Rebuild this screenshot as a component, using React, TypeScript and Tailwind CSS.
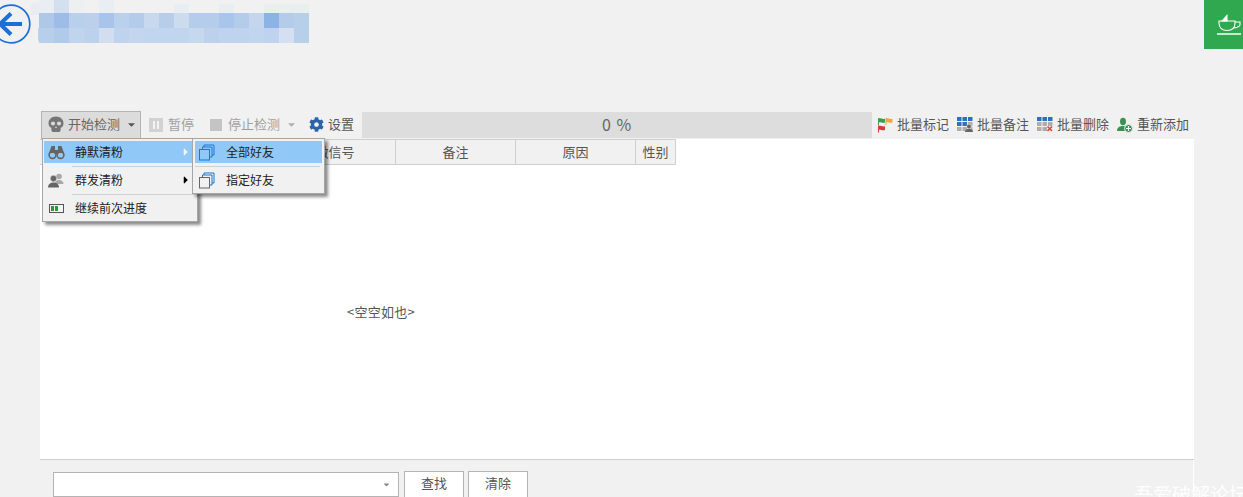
import React from "react";
import { FaCog, FaCaretDown, FaCaretRight } from "react-icons/fa";

const FONT = "font-['Noto_Sans_CJK_SC','Noto_Sans',sans-serif]";

// Mosaic colours of the blurred title, one list per row
const mosaicTop = ["#e9eef3", "#d3e0f0", "#eeeff0", "#f1f1f1", "#e8eef2", "#f1f1f1", "#f1f1f1", "#f1f1f1", "#f1f1f1", "#e8eef2", "#f1f1f1", "#f1f1f1", "#e8eef1", "#f1f1f1", "#f1f1f1", "#e9eeee", "#e9eeee", "#e9eeee"];
const mosaicMid = ["#b0c8e8", "#9dbde6", "#b8d0ec", "#bcd0ec", "#a8c4ea", "#bad0ec", "#b4ccea", "#c8d8ee", "#b8cde9", "#ccdcee", "#b5cdeb", "#b5cdeb", "#a9c6ea", "#b3cce9", "#c4d6ee", "#8cb3e3", "#b4ccea", "#b8cfea"];
const mosaicLow = ["#b8cfec", "#b0caea", "#c0d4ee", "#bcd1ec", "#d2def0", "#bfd3ee", "#c4d6ee", "#c2d5ee", "#c2d5ee", "#c2d5ee", "#c6d8ee", "#bcd1ec", "#bfd3ee", "#bfd3ee", "#c2d5ee", "#bfd3ee", "#d4e0f1", "#b8cfea"];

const BackIcon = () => (
  <svg width="40" height="40" viewBox="0 0 40 40" className="-ml-[9px] mt-[4px] shrink-0">
    <circle cx="20" cy="20" r="18.8" fill="none" stroke="#1c6fd6" strokeWidth="1.7" />
    <path d="M9 20H31M20 9.5L9 20L20 30.5" fill="none" stroke="#1c6fd6" strokeWidth="4" />
  </svg>
);

const Mosaic = () => (
  <svg width="279" height="43" viewBox="0 0 279 43" className="shrink-0">
    <rect x="0" y="2" width="10" height="12" rx="5" fill="#e9edf1" />
    <rect x="0" y="13" width="10" height="2" fill="#e9edf1" />
    <rect x="7" y="28" width="3" height="13" rx="1" fill="#bcd1ec" />
    {mosaicTop.map((c, i) => (
      <rect key={i} x={8 + i * 15} y={i > 8 ? 4 : 0} width="15" height={i > 8 ? 9 : 13} fill={c} />
    ))}
    {mosaicMid.map((c, i) => (
      <rect key={i} x={8 + i * 15} y="13" width="15" height="15" fill={c} />
    ))}
    {mosaicLow.map((c, i) => (
      <rect key={i} x={8 + i * 15} y="28" width="15" height="15" fill={c} />
    ))}
  </svg>
);

const CupIcon = () => (
  <svg width="26" height="22" viewBox="0 0 26 22" fill="none" stroke="#fff" strokeWidth="1.1">
    <path d="M3 7H19V9C19 14 16 16.5 11 16.5C6 16.5 3 14 3 9Z" />
    <path d="M19 8H24V10.5C24 12.5 21.5 13.5 18 14" />
    <path d="M1 20H25" strokeWidth="1.5" />
    <path d="M6 7L11 1.5L11 7Z" fill="#fff" />
  </svg>
);

const SkullIcon = () => (
  <svg width="16" height="17" viewBox="0 0 16 17">
    <path d="M8 0.5C12.3 0.5 15.5 3.4 15.5 7.2C15.5 9.6 14.3 11 12.6 11.8V14.2C12.6 15.4 11.6 16 10.6 16H5.4C4.4 16 3.4 15.4 3.4 14.2V11.8C1.7 11 0.5 9.6 0.5 7.2C0.5 3.4 3.7 0.5 8 0.5Z" fill="#757575" />
    <circle cx="5" cy="7.5" r="2.1" fill="#d8d8d8" />
    <circle cx="11" cy="7.5" r="2.1" fill="#d8d8d8" />
    <path d="M8 10L9 12H7Z" fill="#d8d8d8" />
  </svg>
);

const BinocularsIcon = () => (
  <svg width="17" height="15" viewBox="0 0 17 15">
    <path d="M3.5 1H7V5H10V1H13.5L16 8H10.5V9H6.5V8H1Z" fill="#646464" />
    <circle cx="4.5" cy="10" r="3.4" fill="none" stroke="#646464" strokeWidth="1.6" />
    <circle cx="12.5" cy="10" r="3.4" fill="none" stroke="#646464" strokeWidth="1.6" />
  </svg>
);

const UsersIcon = () => (
  <svg width="16" height="15" viewBox="0 0 16 15">
    <circle cx="11" cy="3.5" r="2.8" fill="#a8a8a8" />
    <path d="M7 11C7 8 9 7 11 7C13 7 15.5 8 15.5 11Z" fill="#a8a8a8" />
    <circle cx="5.5" cy="5.5" r="3.2" fill="#666" stroke="#f1f1f1" strokeWidth="0.5" />
    <path d="M0 14.5C0 11 2.5 9.5 5.5 9.5C8.5 9.5 11 11 11 14.5Z" fill="#666" />
  </svg>
);

const Flag = ({ x, y, color }: { x: number; y: number; color: string }) => (
  <g transform={`translate(${x} ${y})`}>
    <path d="M0.5 0V7" stroke={color} />
    <path d="M0.5 0.5C2.5 -0.3 4 1.6 7 0.8V4.6C4 5.4 2.5 3.6 0.5 4.4Z" fill={color} />
  </g>
);

const FlagsIcon = () => (
  <svg width="15" height="16" viewBox="0 0 15 16">
    <Flag x={0} y={1} color="#3f9a4e" />
    <Flag x={7.5} y={1} color="#f0a83c" />
    <Flag x={0} y={8.5} color="#d93a3a" />
  </svg>
);

const GridCells = ({ colors }: { colors: string[] }) => (
  <>
    {colors.map((c, i) => (
      <rect key={i} x={(i % 3) * 5.5} y={Math.floor(i / 3) * 5} width="4.5" height="4" fill={c} />
    ))}
  </>
);

const BLUE = "#2f6fc0";
const GREY = "#adadad";

const GridNoteIcon = () => (
  <svg width="16" height="15" viewBox="0 0 16 15">
    <GridCells colors={[BLUE, BLUE, BLUE, BLUE, BLUE, GREY, GREY, GREY, GREY]} />
    <circle cx="12" cy="9.5" r="2.4" fill="#666" stroke="#f1f1f1" strokeWidth="0.6" />
    <path d="M8 15C8 12.5 10 12 12 12C14 12 16 12.5 16 15Z" fill="#666" />
  </svg>
);

const GridDeleteIcon = () => (
  <svg width="16" height="15" viewBox="0 0 16 15">
    <GridCells colors={[BLUE, BLUE, BLUE, GREY, GREY, GREY, GREY, GREY, GREY]} />
    <rect x="10" y="9" width="6" height="6" fill="#f1f1f1" />
    <path d="M10.5 9.5L15 14M15 9.5L10.5 14" stroke="#d8453a" strokeWidth="1.6" />
  </svg>
);

const AddUserIcon = () => (
  <svg width="16" height="16" viewBox="0 0 16 16">
    <ellipse cx="6" cy="4.5" rx="3" ry="3.8" fill="#3a9152" />
    <path d="M0 14C0 10 3 9 6 9C8 9 9 9.5 9 9.5V14Z" fill="#3a9152" />
    <circle cx="11.5" cy="11.5" r="4" fill="#3a9152" stroke="#f1f1f1" />
    <path d="M9 11.5H14M11.5 9V14" stroke="#fff" strokeWidth="1.2" />
  </svg>
);

const StackIcon = ({ front }: { front: string }) => (
  <svg width="16" height="17" viewBox="0 0 16 17" fill="none">
    <path d="M5 3V1H15V11H13" stroke="#1c75d2" />
    <path d="M3.5 5V3H13V13H11" stroke="#1c75d2" />
    <rect x="0.5" y="5.5" width="10" height="10.5" stroke={front} />
  </svg>
);

const ProgressIcon = () => (
  <svg width="15" height="9" viewBox="0 0 15 9">
    <rect x="0.5" y="0.5" width="14" height="8" fill="#f4f4f4" stroke="#555" />
    <rect x="2" y="2" width="3" height="5" fill="#1f9d3f" />
    <rect x="6" y="2" width="3" height="5" fill="#1f9d3f" />
  </svg>
);

const ToolItem = ({ icon, label, dim }: { icon: React.ReactNode; label: string; dim?: boolean }) => (
  <div className={`flex items-center gap-[4px] text-[13px] ${dim ? "text-[#a0a0a0]" : "text-[#555]"}`}>
    <span className="flex w-[16px] justify-center">{icon}</span>
    <span className="-translate-y-px">{label}</span>
  </div>
);

const MenuRow = ({
  icon,
  label,
  active,
  arrow,
  arrowColor,
  labelLeft,
}: {
  icon: React.ReactNode;
  label: string;
  active?: boolean;
  arrow?: boolean;
  arrowColor?: string;
  labelLeft: string;
}) => (
  <div className={`relative flex h-[22px] items-center text-[12px] text-[#222] ${active ? "bg-[#90c8f8]" : ""}`}>
    <span className="flex w-[24px] justify-center">{icon}</span>
    <span className={labelLeft}>{label}</span>
    {arrow && <FaCaretRight className={`absolute right-[5px] text-[12px] ${arrowColor}`} />}
  </div>
);

const Separator = ({ left }: { left: string }) => (
  <div className={`my-[2px] mr-[2px] h-[2px] border-b border-[#d0d0d0] ${left}`} />
);

const HeaderCell = ({ width, label }: { width: string; label?: string }) => (
  <div className={`flex h-full items-center justify-center border-r border-[#cfcfcf] ${width}`}>{label}</div>
);

export default function App() {
  return (
    <div className={`relative h-[497px] w-[1243px] overflow-hidden bg-[#f1f1f1] ${FONT}`}>
      {/* top bar */}
      <div className="flex h-[110px] items-start">
        <BackIcon />
        <Mosaic />
        <div className="ml-auto flex h-[49px] w-[39px] items-center justify-center bg-[#2fa84f] pl-[10px] pt-[1px]">
          <span className="shrink-0"><CupIcon /></span>
        </div>
      </div>

      <div className="ml-[40px] w-[1154px]">
        {/* toolbar */}
        <div className="relative flex h-[29px] items-center">
          <div className="ml-px flex h-[28px] w-[100px] items-center border border-[#b4b4b4] bg-[#dcdcdc] pl-[6px] text-[13px] text-[#666]">
            <SkullIcon />
            <span className="ml-[4px] -translate-y-px">开始检测</span>
            <FaCaretDown className="ml-[6px] text-[11px] text-[#555]" />
          </div>
          <div className="ml-[7px]">
            <ToolItem
              dim
              label="暂停"
              icon={
                <span className="flex h-[14px] w-[14px] items-center justify-center gap-[2px] bg-[#d2d2d2]">
                  <span className="h-[8px] w-[2px] bg-[#f4f4f4]" />
                  <span className="h-[8px] w-[2px] bg-[#f4f4f4]" />
                </span>
              }
            />
          </div>
          <div className="ml-[14px] flex items-center">
            <ToolItem dim label="停止检测" icon={<span className="h-[12px] w-[12px] bg-[#c4c4c4]" />} />
            <FaCaretDown className="ml-[6px] text-[11px] text-[#b0b0b0]" />
          </div>
          <div className="ml-[11px]">
            <ToolItem label="设置" icon={<FaCog className="text-[15px] text-[#2c64a8]" />} />
          </div>
          <div className="ml-[8px] flex h-[26px] w-[510px] items-center justify-center bg-[#dcdddc] text-[16px] tracking-[1px] text-[#666]">
            <span className="-translate-y-px">0 %</span>
          </div>
          <div className="ml-[5px]">
            <ToolItem label="批量标记" icon={<FlagsIcon />} />
          </div>
          <div className="ml-[8px]">
            <ToolItem label="批量备注" icon={<GridNoteIcon />} />
          </div>
          <div className="ml-[8px]">
            <ToolItem label="批量删除" icon={<GridDeleteIcon />} />
          </div>
          <div className="ml-[8px]">
            <ToolItem label="重新添加" icon={<AddUserIcon />} />
          </div>

          {/* first level menu */}
          <div className="absolute left-[2px] top-[28px] z-10 h-[84px] w-[156px] border border-[#a6a6a6] bg-[#f1f1f1] py-[2px] pl-[1px] shadow-[3px_3px_3px_rgba(0,0,0,0.45)]">
            <MenuRow
              active
              arrow
              arrowColor="text-[#f4f4f4]"
              labelLeft="ml-[7px]"
              label="静默清粉"
              icon={<BinocularsIcon />}
            />
            <Separator left="ml-[28px]" />
            <MenuRow
              arrow
              arrowColor="text-black"
              labelLeft="ml-[7px]"
              label="群发清粉"
              icon={<UsersIcon />}
            />
            <Separator left="ml-[28px]" />
            <MenuRow labelLeft="ml-[7px]" label="继续前次进度" icon={<ProgressIcon />} />
          </div>

          {/* second level menu */}
          <div className="absolute left-[152px] top-[28px] z-20 h-[56px] w-[133px] border border-[#a6a6a6] bg-[#f1f1f1] px-[2px] py-[2px] shadow-[3px_3px_3px_rgba(0,0,0,0.45)]">
            <MenuRow active labelLeft="ml-[7px]" label="全部好友" icon={<StackIcon front="#1c75d2" />} />
            <Separator left="ml-0" />
            <MenuRow labelLeft="ml-[7px]" label="指定好友" icon={<StackIcon front="#666" />} />
          </div>
        </div>

        {/* table */}
        <div className="flex h-[320px] flex-col bg-white">
          <div className="flex h-[26px] w-[636px] border-y border-[#cfcfcf] bg-[#f1f1f1] text-[13px] text-[#555]">
            <HeaderCell width="w-[115px]" />
            <HeaderCell width="w-[120px]" />
            <HeaderCell width="w-[121px]" label="微信号" />
            <HeaderCell width="w-[120px]" label="备注" />
            <HeaderCell width="w-[120px]" label="原因" />
            <HeaderCell width="w-[40px]" label="性别" />
          </div>
          <div className="flex w-[682px] flex-1 items-center justify-center text-[13px] tracking-[0.3px] text-[#555]">
            &lt;空空如也&gt;
          </div>
        </div>

        {/* search bar */}
        <div className="flex h-[60px] items-start border-t border-t-[#cfcfcf] pl-[13px] pt-[11px]">
          <div className="mt-px flex h-[25px] w-[346px] items-center justify-end border border-[#b4b4b4] bg-white pr-[7px]">
            <FaCaretDown className="text-[9px] text-[#888]" />
          </div>
          <button className="ml-[5px] h-[27px] w-[60px] border border-[#b4b4b4] bg-white pb-[3px] text-[13px] text-[#555]">查找</button>
          <button className="ml-[4px] h-[27px] w-[60px] border border-[#b4b4b4] bg-white pb-[3px] text-[13px] text-[#555]">清除</button>
          <div className="ml-auto h-full w-px -translate-y-[11px] self-stretch bg-white" />
        </div>
      </div>

      {/* forum watermark */}
      <div className="absolute left-[1134px] top-[482px] whitespace-nowrap text-[19px] leading-[24px] text-white/90">吾爱破解论坛</div>
    </div>
  );
}
